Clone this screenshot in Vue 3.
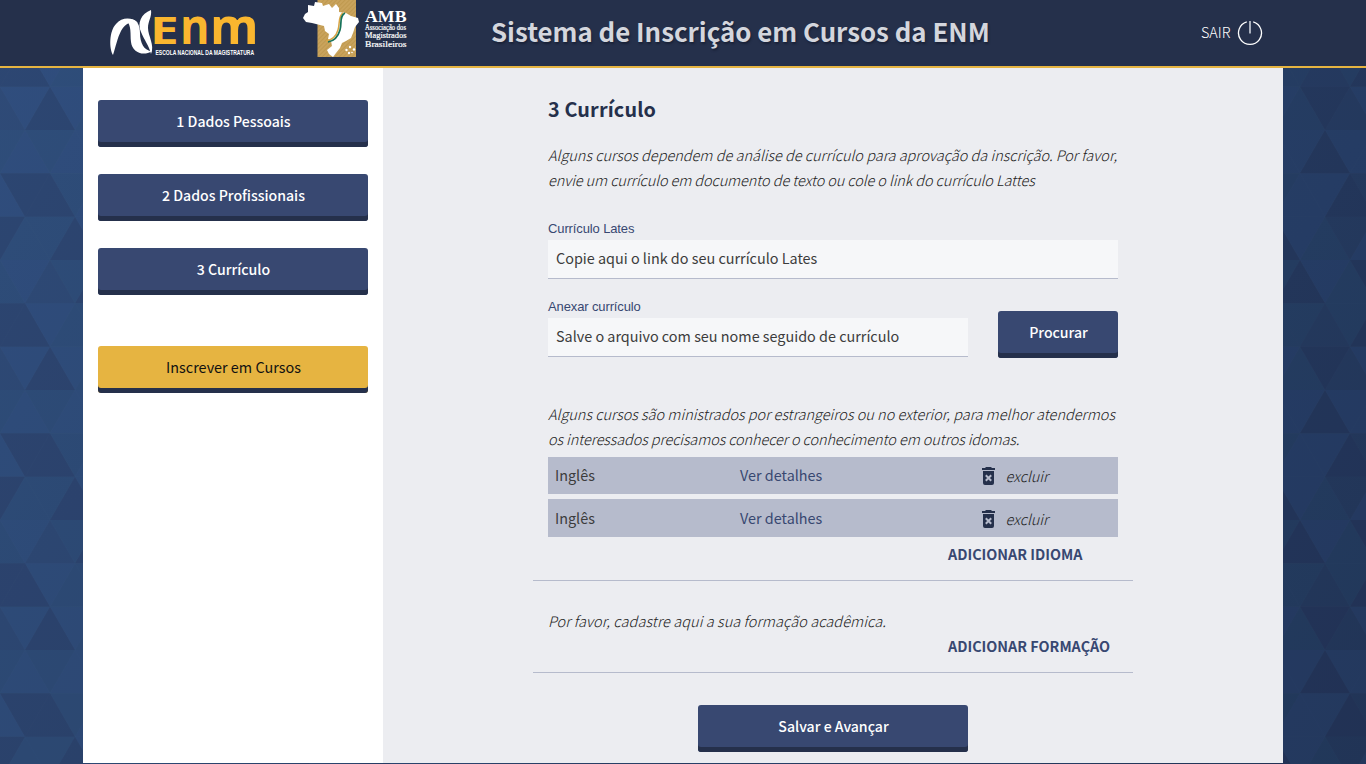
<script setup>
const steps = ['1 Dados Pessoais', '2 Dados Profissionais', '3 Currículo']
const languages = [{ name: 'Inglês' }, { name: 'Inglês' }]

// Triangle mosaic: each row lists [direction, apex x, tone]
const H = 43.333
const rows = [
  [['u', 0, 'm'], ['d', 25, 'l'], ['u', 50, 's'], ['d', 75, 'm'], ['u', 100, 'd'], ['d', 125, 'l'], ['u', 150, 'm'], ['d', 175, 'd']],
  [['d', 0, 'd'], ['u', 25, 'd'], ['d', 50, 'l'], ['u', 75, 'm'], ['d', 100, 'm'], ['u', 125, 's'], ['d', 150, 'm'], ['u', 175, 'd']],
  [['u', 0, 's'], ['d', 25, 'l'], ['u', 50, 'd'], ['d', 75, 'l'], ['u', 100, 'm'], ['d', 125, 'd'], ['u', 150, 's'], ['d', 175, 'l']],
  [['d', 0, 'm'], ['u', 25, 'l'], ['d', 50, 'm'], ['u', 75, 'l'], ['d', 100, 'l'], ['u', 125, 'd'], ['d', 150, 'l'], ['u', 175, 'l']],
  [['u', 0, 'l'], ['d', 25, 'd'], ['u', 50, 'd'], ['d', 75, 'm'], ['u', 100, 'l'], ['d', 125, 'l'], ['u', 150, 'd'], ['d', 175, 's']],
  [['d', 0, 'd'], ['u', 25, 'm'], ['d', 50, 'm'], ['u', 75, 'd'], ['d', 100, 'l'], ['u', 125, 'm'], ['d', 150, 's'], ['u', 175, 'l']]
]
const triangles = rows.flatMap((row, r) =>
  row.map(([dir, x, tone]) => {
    const a = dir === 'u' ? r * H : (r + 1) * H
    const b = dir === 'u' ? (r + 1) * H : r * H
    return { points: `${x},${a} ${x - 25},${b} ${x + 25},${b}`, tone }
  })
)
</script>

<template>
  <div class="page">
    <svg class="mosaic" width="1366" height="764" aria-hidden="true">
      <defs>
        <linearGradient id="base" gradientUnits="userSpaceOnUse" x1="0" y1="0" x2="1366" y2="764">
          <stop offset="0" stop-color="#304d7a" />
          <stop offset="1" stop-color="#213456" />
        </linearGradient>
        <pattern id="tri" width="300" height="260" patternUnits="userSpaceOnUse">
          <polygon v-for="(t, i) in triangles" :key="i" :points="t.points" :class="'tone-' + t.tone" />
        </pattern>
      </defs>
      <rect width="1366" height="764" fill="url(#base)" />
      <rect width="1366" height="764" fill="url(#tri)" />
    </svg>

    <header class="topbar">
      <svg class="logo-enm" width="160" height="64" viewBox="0 0 160 64">
        <path class="swoosh" d="M7 55C3 49 3 31 10 24C16 17 26 17 32 23C25 20 19 24 15 31C11 39 10 46 7 55Z" />
        <path class="swoosh" d="M20 20C30 17 34 24 34 33C34 43 38 51 46 51C37 57 26 52 25 42C24 34 26 26 20 20Z" />
        <path class="swoosh" d="M45 10C35 14 31 23 35 32C38 40 43 45 45 54C49 45 42 36 42 28C42 21 46 17 45 10Z" />
        <g class="enm">
          <text transform="translate(44 44) scale(1.350 1)" font-size="38">E</text>
          <text transform="translate(74 44) scale(0.900 1)" font-size="50">n</text>
          <text transform="translate(104 44) scale(0.990 1)" font-size="50">m</text>
        </g>
        <text class="enm-sub" x="49.500" y="54.500" textLength="98.500" lengthAdjust="spacingAndGlyphs">ESCOLA NACIONAL DA MAGISTRATURA</text>
      </svg>

      <svg class="logo-amb" width="110" height="60" viewBox="0 0 110 60">
        <defs>
          <pattern id="hatch" width="3" height="3" patternUnits="userSpaceOnUse" patternTransform="rotate(-45)">
            <rect width="3" height="3" fill="#c9a35c" />
            <rect width="3" height="1" fill="#bf994f" />
          </pattern>
        </defs>
        <rect x="15.500" y="0" width="38.500" height="57" fill="url(#hatch)" />
        <path fill="#fff" d="M6 5L12 6L13 2L20 3L21 6L27 4L30 8L34 4L37 8L37 12L44 13L49 16L56 18L57 22L53 27L51 33L49 38L44 41L40 43L38 48L34 53L31 57L27 54L25 50L30 46L29 41L26 39L27 34L23 31L22 26L14 24L10 23L4 22L1 18L3 14L6 12Z" />
        <path fill="none" stroke="#d7a444" stroke-width="1.500" d="M41 13C36 16 38 24 36 30C34 37 30 40 24 41" />
        <path fill="none" stroke="#17725a" stroke-width="1.700" d="M43 13C37 16 40 24 38 30C36 37 32 41 26 42" />
        <g fill="#fff"><circle cx="48" cy="47" r="1.200" /><circle cx="44.500" cy="50" r="1.200" /><circle cx="52" cy="49.500" r="1.200" /><circle cx="47" cy="53" r="1.200" /><circle cx="50" cy="52.500" r="0.800" /></g>
        <g class="amb-text">
          <text x="63" y="21.500" font-size="16.500" textLength="41.500" lengthAdjust="spacingAndGlyphs">AMB</text>
          <text class="light" x="63" y="29.500" font-size="7.500" textLength="41" lengthAdjust="spacingAndGlyphs">Associação dos</text>
          <text class="light" x="63" y="37.700" font-size="8" textLength="41.500" lengthAdjust="spacingAndGlyphs">Magistrados</text>
          <text class="light" x="63" y="46.800" font-size="8.500" textLength="41.500" lengthAdjust="spacingAndGlyphs">Brasileiros</text>
        </g>
      </svg>

      <h1>Sistema de Inscrição em Cursos da ENM</h1>

      <a class="exit">
        <span>SAIR</span>
        <svg width="26" height="26" viewBox="0 0 26 26" fill="none">
          <path d="M9.800 1.900A11.500 11.500 0 1 0 16.200 1.900" stroke="#fff" stroke-width="1.300" />
          <path d="M13 1V13.500" stroke="#aab0bd" stroke-width="2" />
        </svg>
      </a>
    </header>

    <div class="shell">
      <nav class="sidebar">
        <button v-for="s in steps" :key="s" class="btn">{{ s }}</button>
        <button class="btn gold">Inscrever em Cursos</button>
      </nav>

      <main class="content">
        <section class="block first">
          <h2>3 Currículo</h2>
          <p class="hint intro"><span class="l1">Alguns cursos dependem de análise de currículo para aprovação da inscrição. Por favor,</span><br /><span class="l2">envie um currículo em documento de texto ou cole o link do currículo Lattes</span></p>
          <div class="field">
            <label>Currículo Lates</label>
            <div class="input">Copie aqui o link do seu currículo Lates</div>
          </div>
          <div class="upload">
            <div class="field">
              <label>Anexar currículo</label>
              <div class="input">Salve o arquivo com seu nome seguido de currículo</div>
            </div>
            <button class="btn small">Procurar</button>
          </div>
          <p class="hint langs"><span class="l1">Alguns cursos são ministrados por estrangeiros ou no exterior, para melhor atendermos</span><br /><span class="l2">os interessados precisamos conhecer o conhecimento em outros idomas.</span></p>
          <ul class="list">
            <li v-for="(l, i) in languages" :key="i">
              <span>{{ l.name }}</span>
              <a class="details">Ver detalhes</a>
              <a class="remove">
                <svg width="14" height="18" viewBox="0 0 14 18">
                  <path fill="#25304b" d="M4 0H9L10 1H13V3H0V1H3ZM1 4H12V16Q12 18 10 18H3Q1 18 1 16Z" />
                  <path stroke="#b6bbcc" stroke-width="2" d="M3.800 8.300L9.200 13.700M9.200 8.300L3.800 13.700" />
                </svg>
                <em>excluir</em>
              </a>
            </li>
          </ul>
          <a class="add">ADICIONAR IDIOMA</a>
        </section>

        <section class="block second">
          <p class="hint"><span>Por favor, cadastre aqui a sua formação acadêmica.</span></p>
          <a class="add">ADICIONAR FORMAÇÃO</a>
        </section>

        <button class="btn save">Salvar e Avançar</button>
      </main>
    </div>
  </div>
</template>

<style>
body {
  margin: 0;
  overflow: hidden;
}
</style>

<style scoped>
* {
  box-sizing: border-box;
}
.page {
  position: relative;
  width: 1366px;
  height: 764px;
  overflow: hidden;
  font: 400 14.4px/24px "Noto Sans CJK SC", "Open Sans", sans-serif;
  color: #3c3c3c;
}
.mosaic {
  position: absolute;
  inset: 0;
}
.tone-l { fill: #3358a0; fill-opacity: 0.1; }
.tone-m { fill: #2a5580; fill-opacity: 0.08; }
.tone-s { fill: #232f52; fill-opacity: 0.08; }
.tone-d { fill: #22284c; fill-opacity: 0.16; }

.topbar {
  position: relative;
  display: flex;
  align-items: flex-start;
  height: 68px;
  padding-left: 106px;
  background: #25304b;
  border-bottom: 2px solid #e6b441;
}
.logo-enm,
.logo-amb {
  flex: none;
  overflow: visible;
}
.swoosh {
  fill: #fff;
}
.enm text {
  font-family: "Open Sans", sans-serif;
  font-weight: 700;
  fill: #fab62f;
}
.enm-sub {
  font: 700 7.5px "Liberation Sans", sans-serif;
  fill: #fff;
}
.logo-amb {
  margin-left: 36px;
}
.amb-text {
  font-family: "Liberation Serif", serif;
  font-weight: 700;
  fill: #fff;
}
.amb-text .light {
  font-weight: 400;
  stroke: #fff;
  stroke-width: 0.2px;
}
h1 {
  margin: 11px 0 0 79px;
  width: 500px;
  font-size: 25.83px;
  line-height: 40px;
  font-weight: 700;
  color: #d4d6dd;
  white-space: nowrap;
  text-shadow: 1px 2px 2px #1a2238;
}
.exit {
  display: flex;
  margin: 20px 0 0 210px;
  color: #fff;
  font-weight: 300;
  gap: 6px;
}
.exit span {
  width: 30px;
}

.shell {
  position: relative;
  display: flex;
  width: 1200px;
  height: 695px;
  margin: 0 auto;
}
.sidebar {
  width: 300px;
  padding: 32px 15px 0;
  background: #fff;
}
.btn {
  display: block;
  width: 270px;
  height: 47px;
  margin: 0 0 27px;
  padding: 0 0 5px 1px;
  border: 0;
  border-radius: 3px;
  background: #384871;
  box-shadow: inset 0 -5px 0 #25304b;
  color: #fff;
  font: 500 14.1px/42px "Noto Sans CJK SC", "Open Sans", sans-serif;
  text-align: center;
}
.gold {
  margin-top: 51px;
  background: #e6b441;
  color: #111;
  font-weight: 400;
  font-size: 14.4px;
}
.content {
  width: 900px;
  padding: 0 150px;
  background: #ecedf1;
}
.block {
  padding: 0 15px;
  border-bottom: 1px solid #b6bbcc;
}
.first {
  height: 513px;
  padding-top: 29px;
}
h2 {
  margin: 0;
  font-size: 19.8px;
  letter-spacing: 0.15px;
  line-height: 24px;
  font-weight: 700;
  color: #25304b;
}
.hint {
  margin: 0;
  font-weight: 300;
  font-style: italic;
  font-size: 14.5px;
  line-height: 25px;
  letter-spacing: 0.08px;
  color: #222;
  white-space: nowrap;
}
.hint .l1 {
  letter-spacing: 0;
}
.hint .l2 {
  letter-spacing: -0.1px;
}
.intro {
  margin-top: 21px;
}
.field label {
  display: block;
  font: 13px/16px "Liberation Sans", Arial, sans-serif;
  letter-spacing: -0.12px;
  color: #384871;
  margin-bottom: 3px;
}
.intro + .field {
  margin-top: 29px;
}
.input {
  height: 39px;
  padding: 0 8px;
  background: #f6f7f9;
  border-bottom: 1px solid #b6bbcc;
  line-height: 36px;
}
.upload {
  display: flex;
  align-items: flex-start;
  gap: 30px;
  margin-top: 20px;
}
.upload .field {
  width: 420px;
}
.small {
  width: 120px;
  margin: 12px 0 0;
}
.langs {
  margin-top: 43px;
}
.list {
  display: grid;
  grid-template-rows: 37px 38px;
  gap: 5px;
  margin: 6px 0 0;
  padding: 0;
  list-style: none;
}
.list li {
  display: grid;
  grid-template-columns: 185px 242px 1fr;
  align-items: start;
  padding: 6px 0 0 7px;
  background: #b6bbcc;
}
.list li:last-child {
  padding-top: 7px;
}
.details {
  color: #384871;
}
.remove {
  display: flex;
  align-items: center;
  gap: 9.5px;
  padding-top: 1px;
}
.remove em {
  font-weight: 300;
  font-size: 14.5px;
  color: #222;
}
.add {
  display: block;
  margin: 5px 0 0 400px;
  font-weight: 700;
  font-size: 14.35px;
  color: #384871;
  white-space: nowrap;
}
.second {
  height: 92px;
  padding-top: 27px;
}
.second .add {
  margin-top: 1px;
}
.save {
  margin: 32px 0 0 165px;
}
</style>
